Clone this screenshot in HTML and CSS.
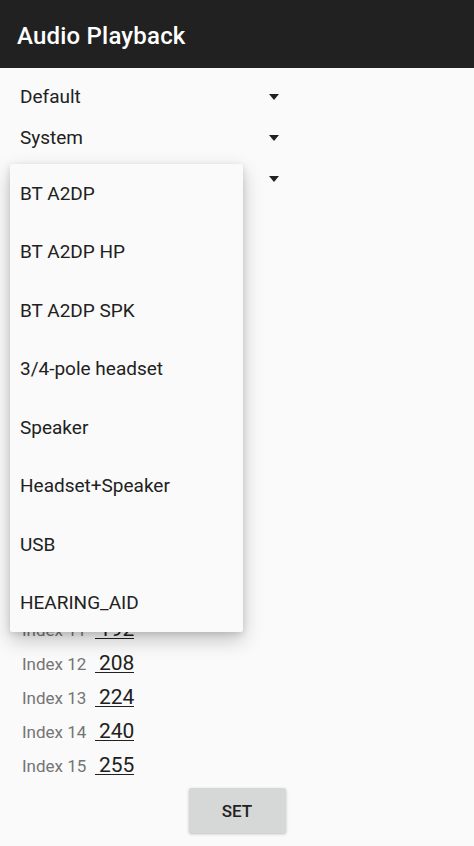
FILE: index.html
```html
<!DOCTYPE html>
<html>
<head>
<meta charset="utf-8">
<link rel="stylesheet" href="styles.css">
</head>
<body>
<header class="appbar"><h1 class="title">Audio Playback</h1></header>
<main class="content">
  <div class="spinner"><span class="spinner-text">Default</span><span class="arrow"></span></div>
  <div class="spinner"><span class="spinner-text">System</span><span class="arrow"></span></div>
  <div class="spinner"><span class="spinner-text covered">BT A2DP</span><span class="arrow"></span></div>
  <div class="indexes">
    <div class="row covered"><span class="label">Index 0</span><span class="value">16</span></div>
    <div class="row covered"><span class="label">Index 1</span><span class="value">32</span></div>
    <div class="row covered"><span class="label">Index 2</span><span class="value">48</span></div>
    <div class="row covered"><span class="label">Index 3</span><span class="value">64</span></div>
    <div class="row covered"><span class="label">Index 4</span><span class="value">80</span></div>
    <div class="row covered"><span class="label">Index 5</span><span class="value">96</span></div>
    <div class="row covered"><span class="label">Index 6</span><span class="value">112</span></div>
    <div class="row covered"><span class="label">Index 7</span><span class="value">128</span></div>
    <div class="row covered"><span class="label">Index 8</span><span class="value">144</span></div>
    <div class="row covered"><span class="label">Index 9</span><span class="value">160</span></div>
    <div class="row covered"><span class="label">Index 10</span><span class="value">176</span></div>
    <div class="row"><span class="label">Index 11</span><span class="value">192</span></div>
    <div class="row"><span class="label">Index 12</span><span class="value">208</span></div>
    <div class="row"><span class="label">Index 13</span><span class="value">224</span></div>
    <div class="row"><span class="label">Index 14</span><span class="value">240</span></div>
    <div class="row"><span class="label">Index 15</span><span class="value">255</span></div>
  </div>
  <div class="actions"><button class="set-btn">SET</button></div>
</main>
<ul class="popup">
  <li class="item">BT A2DP</li>
  <li class="item">BT A2DP HP</li>
  <li class="item">BT A2DP SPK</li>
  <li class="item">3/4-pole headset</li>
  <li class="item">Speaker</li>
  <li class="item">Headset+Speaker</li>
  <li class="item">USB</li>
  <li class="item">HEARING_AID</li>
</ul>
</body>
</html>
```
FILE: styles.css
```css
html, body {
  margin: 0;
  padding: 0;
  background: #fafafa;
  font-family: Roboto, "Noto Sans", sans-serif;
  color: #212121;
  width: 474px;
  height: 846px;
  overflow: hidden;
}
.appbar {
  height: 68px;
  background: #212121;
  display: flex;
  align-items: center;
  padding: 3px 17px 0;
  box-sizing: border-box;
}
.title {
  margin: 0;
  font-size: 24px;
  font-weight: 500;
  color: #ffffff;
  letter-spacing: 0.2px;
}
.content {
  padding-top: 8px;
}
.spinner {
  height: 41px;
  display: flex;
  align-items: center;
  padding-left: 20px;
  width: 279px;
  box-sizing: border-box;
  justify-content: space-between;
}
.spinner-text {
  font-size: 19px;
  color: #212121;
}
.arrow {
  width: 0;
  height: 0;
  border-left: 5.5px solid transparent;
  border-right: 5.5px solid transparent;
  border-top: 6px solid #212121;
}
.covered {
  visibility: hidden;
}
.indexes {
  margin-top: 40px;
  padding-left: 22px;
}
.row {
  height: 34px;
  display: flex;
  align-items: baseline;
  padding-top: 7px;
  box-sizing: border-box;
}
.label {
  font-size: 17px;
  color: #757575;
  width: 73px;
}
.value {
  font-size: 21px;
  color: #212121;
  border-bottom: 1.5px solid #212121;
  padding-left: 4px;
  line-height: 18px;
  width: 35px;
}
.actions {
  display: flex;
  justify-content: center;
  margin-top: 5px;
}
.set-btn {
  width: 97px;
  height: 45px;
  border: none;
  border-radius: 2px;
  background: #d6d7d7;
  font-family: Roboto, "Noto Sans", sans-serif;
  font-size: 17px;
  font-weight: 500;
  color: #212121;
  box-shadow: 0 1px 3px rgba(0,0,0,0.25);
  padding: 0;
}
.popup {
  position: absolute;
  left: 10px;
  top: 164px;
  width: 233px;
  margin: 0;
  padding: 0;
  list-style: none;
  background: #fafafa;
  border-radius: 2px;
  box-shadow: 0 8px 20px rgba(0,0,0,0.22), 0 2px 6px rgba(0,0,0,0.12);
}
.item {
  height: 58.5px;
  display: flex;
  align-items: center;
  padding-left: 10px;
  font-size: 19px;
  color: #212121;
}
```
